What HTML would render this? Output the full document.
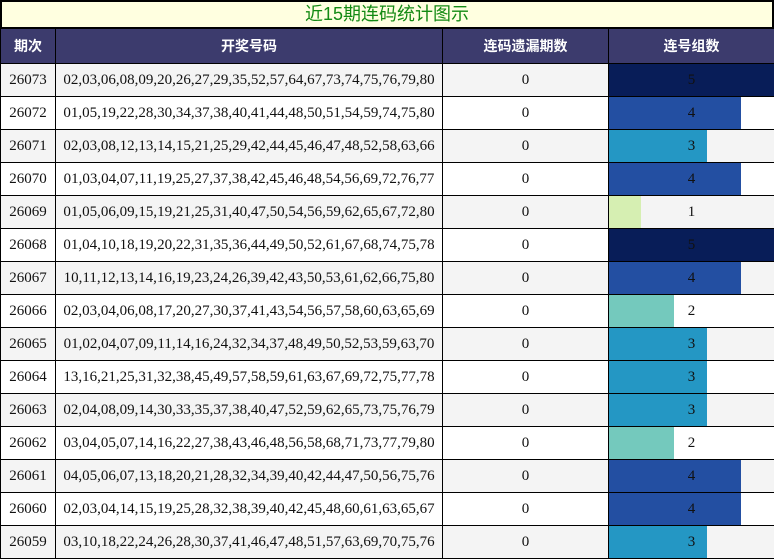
<!DOCTYPE html>
<html><head><meta charset="utf-8"><style>
*{margin:0;padding:0;box-sizing:border-box}
body{width:774px;height:559px;background:#fff;overflow:hidden;position:relative;font-family:"Liberation Serif","Noto Serif CJK SC",serif}
.title{position:absolute;left:0;top:0;width:774px;height:29px;background:#ffffe0;border:2px solid #000;color:#138a13;font:18px "Liberation Sans","Noto Sans CJK SC",sans-serif;text-align:center;line-height:25px}
table{position:absolute;left:0;top:28px;border-collapse:collapse;width:774px;table-layout:fixed}
td,th{border:1px solid #000;text-align:center;padding:0;font-size:15px}
th{background:#3c3b6d;color:#fff;height:35px;font:bold 14px "Liberation Sans","Noto Sans CJK SC",sans-serif}
td{height:33px;color:#111}
tr:nth-child(even) td{background:#f4f4f4}
td.b{position:relative}
td.b div{position:absolute;left:0;top:0;bottom:0}
td.b span{position:relative}
</style></head><body>
<div class="title">近15期连码统计图示</div>
<table>
<colgroup><col style="width:55px"><col style="width:387px"><col style="width:166px"><col style="width:166px"></colgroup>
<tr><th>期次</th><th>开奖号码</th><th>连码遗漏期数</th><th>连号组数</th></tr>
<tr><td>26073</td><td>02,03,06,08,09,20,26,27,29,35,52,57,64,67,73,74,75,76,79,80</td><td>0</td><td class="b"><div style="width:166px;background:#081d58"></div><span>5</span></td></tr>
<tr><td>26072</td><td>01,05,19,22,28,30,34,37,38,40,41,44,48,50,51,54,59,74,75,80</td><td>0</td><td class="b"><div style="width:132px;background:#234fa2"></div><span>4</span></td></tr>
<tr><td>26071</td><td>02,03,08,12,13,14,15,21,25,29,42,44,45,46,47,48,52,58,63,66</td><td>0</td><td class="b"><div style="width:98px;background:#2497c4"></div><span>3</span></td></tr>
<tr><td>26070</td><td>01,03,04,07,11,19,25,27,37,38,42,45,46,48,54,56,69,72,76,77</td><td>0</td><td class="b"><div style="width:132px;background:#234fa2"></div><span>4</span></td></tr>
<tr><td>26069</td><td>01,05,06,09,15,19,21,25,31,40,47,50,54,56,59,62,65,67,72,80</td><td>0</td><td class="b"><div style="width:32px;background:#d6efb2"></div><span>1</span></td></tr>
<tr><td>26068</td><td>01,04,10,18,19,20,22,31,35,36,44,49,50,52,61,67,68,74,75,78</td><td>0</td><td class="b"><div style="width:166px;background:#081d58"></div><span>5</span></td></tr>
<tr><td>26067</td><td>10,11,12,13,14,16,19,23,24,26,39,42,43,50,53,61,62,66,75,80</td><td>0</td><td class="b"><div style="width:132px;background:#234fa2"></div><span>4</span></td></tr>
<tr><td>26066</td><td>02,03,04,06,08,17,20,27,30,37,41,43,54,56,57,58,60,63,65,69</td><td>0</td><td class="b"><div style="width:65px;background:#74c9bd"></div><span>2</span></td></tr>
<tr><td>26065</td><td>01,02,04,07,09,11,14,16,24,32,34,37,48,49,50,52,53,59,63,70</td><td>0</td><td class="b"><div style="width:98px;background:#2497c4"></div><span>3</span></td></tr>
<tr><td>26064</td><td>13,16,21,25,31,32,38,45,49,57,58,59,61,63,67,69,72,75,77,78</td><td>0</td><td class="b"><div style="width:98px;background:#2497c4"></div><span>3</span></td></tr>
<tr><td>26063</td><td>02,04,08,09,14,30,33,35,37,38,40,47,52,59,62,65,73,75,76,79</td><td>0</td><td class="b"><div style="width:98px;background:#2497c4"></div><span>3</span></td></tr>
<tr><td>26062</td><td>03,04,05,07,14,16,22,27,38,43,46,48,56,58,68,71,73,77,79,80</td><td>0</td><td class="b"><div style="width:65px;background:#74c9bd"></div><span>2</span></td></tr>
<tr><td>26061</td><td>04,05,06,07,13,18,20,21,28,32,34,39,40,42,44,47,50,56,75,76</td><td>0</td><td class="b"><div style="width:132px;background:#234fa2"></div><span>4</span></td></tr>
<tr><td>26060</td><td>02,03,04,14,15,19,25,28,32,38,39,40,42,45,48,60,61,63,65,67</td><td>0</td><td class="b"><div style="width:132px;background:#234fa2"></div><span>4</span></td></tr>
<tr><td>26059</td><td>03,10,18,22,24,26,28,30,37,41,46,47,48,51,57,63,69,70,75,76</td><td>0</td><td class="b"><div style="width:98px;background:#2497c4"></div><span>3</span></td></tr>
</table>
</body></html>
